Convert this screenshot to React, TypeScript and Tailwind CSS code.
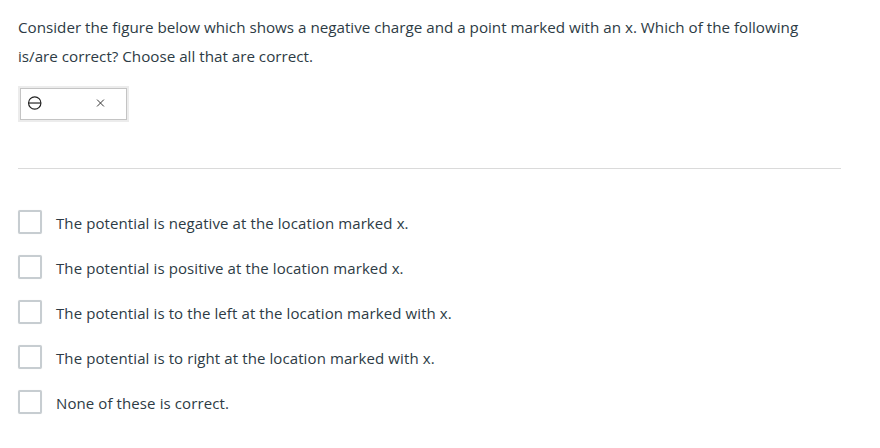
import React from "react";

const options = [
  "The potential is negative at the location marked x.",
  "The potential is positive at the location marked x.",
  "The potential is to the left at the location marked with x.",
  "The potential is to right at the location marked with x.",
  "None of these is correct.",
];

export default function App() {
  return (
    <div
      className="w-[880px] h-[448px] bg-white text-[#2d3b45]"
      style={{ fontFamily: '"Open Sans", "Noto Sans", sans-serif' }}
    >
      <div className="pl-[18px] pt-[13px]">
        <p className="text-[15.2px] leading-[29px] whitespace-nowrap">
          Consider the figure below which shows a negative charge and a point marked with an x. Which of the following
          <br />
          is/are correct? Choose all that are correct.
        </p>
        <div className="mt-[15px] w-[111px] h-[36px] border-2 border-[#ececec]">
          <div className="w-full h-full border border-[#c4c4c4] flex items-center">
            <svg width="107" height="32" viewBox="0 0 107 32" className="block">
              <circle cx="14" cy="15" r="6.3" fill="none" stroke="#222" strokeWidth="1.2" />
              <line x1="7.7" y1="15" x2="20.3" y2="15" stroke="#222" strokeWidth="1.2" />
              <line x1="77.5" y1="11.5" x2="84.5" y2="18.5" stroke="#333" strokeWidth="1" />
              <line x1="84.5" y1="11.5" x2="77.5" y2="18.5" stroke="#333" strokeWidth="1" />
            </svg>
          </div>
        </div>
      </div>
      <div className="ml-[18px] w-[823px] h-px bg-[#dadada] mt-[46px]" />
      <div className="pl-[18px] pt-[41px] flex flex-col gap-[21px]">
        {options.map((o) => (
          <div key={o} className="flex items-center h-[24px]">
            <div className="w-[24px] h-[24px] border-2 border-[#c7cdd1] rounded-[2px] bg-white shadow-[0_0_1px_rgba(0,0,0,0.1)]" />
            <span className="ml-[14px] text-[15px] tracking-[0.1px] relative top-[1px]">{o}</span>
          </div>
        ))}
      </div>
    </div>
  );
}
